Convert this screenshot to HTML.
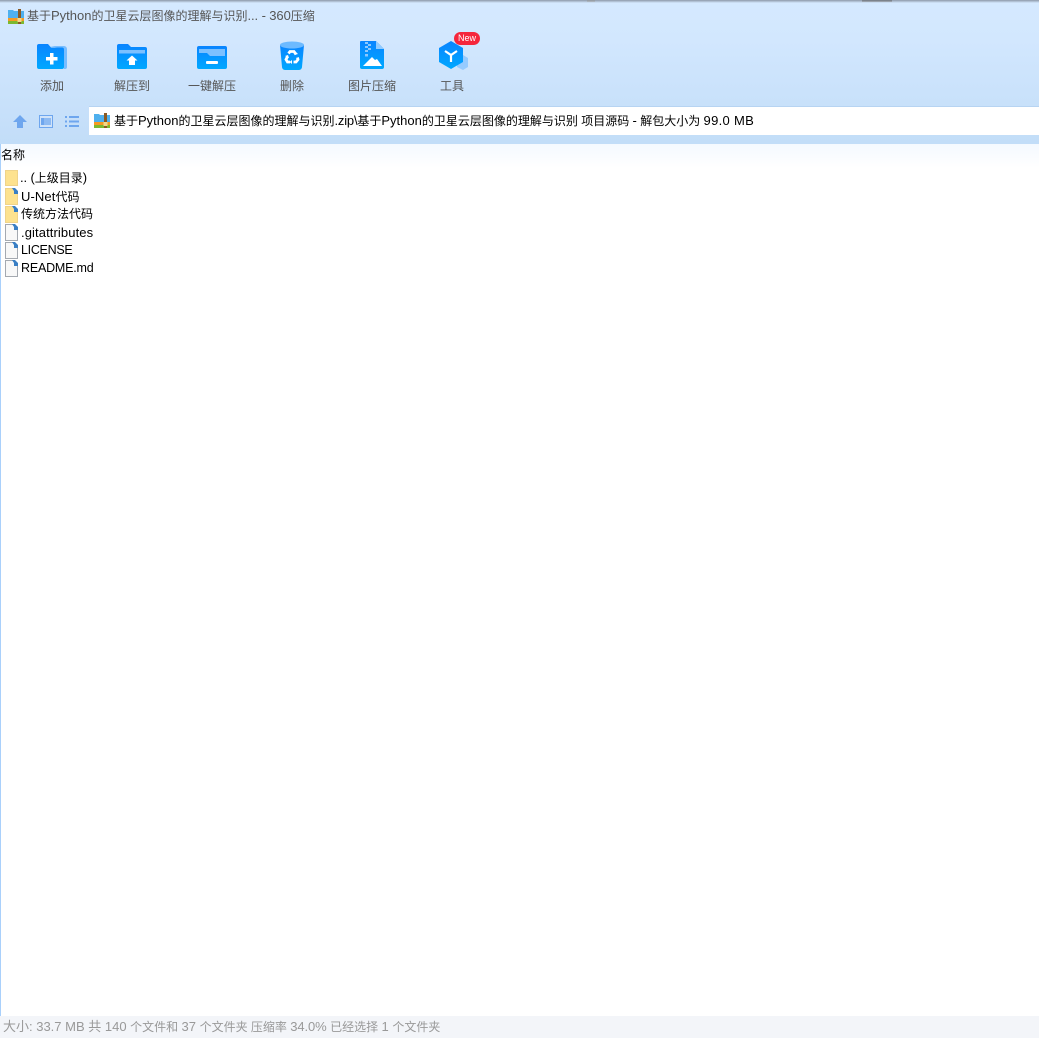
<!DOCTYPE html>
<html><head><meta charset="utf-8"><style>
html,body{margin:0;padding:0;background:#fff}
body{width:1039px;height:1038px;position:relative;overflow:hidden;font:12px "Liberation Sans","Noto Sans CJK SC",sans-serif;color:#000}
.a{position:absolute;white-space:nowrap;line-height:18px}
.a i{font-style:normal;font-size:13px}
.t{position:absolute;width:80px;text-align:center;top:77px;color:#555;line-height:18px}
svg{position:absolute;overflow:visible}
</style></head><body>
<div style="position:absolute;left:0;top:0;width:1039px;height:144px;background:linear-gradient(#d5e9ff 0,#d2e7fe 40px,#c2ddf8 144px)"></div>
<div style="position:absolute;left:0;top:0;width:1039px;height:3px;background:linear-gradient(#8d99a8,#d5e9ff)"></div>
<div style="position:absolute;left:862px;top:0;width:30px;height:2px;background:linear-gradient(#6c727a,#a9b2bd)"></div>
<div style="position:absolute;left:587px;top:0;width:8px;height:2px;background:linear-gradient(#8d939b,#b5bdc7)"></div>
<div style="position:absolute;left:0;top:144px;width:1039px;height:24px;background:linear-gradient(#f4f9ff,#fff)"></div>
<div style="position:absolute;left:0;top:144px;width:1px;height:872px;background:#a9d0fb"></div>

<svg style="left:8px;top:9px" width="16" height="15" viewBox="0 0 16 15"><path d="M0 1h5l1 1h10v7H0z" fill="#4fb0ee"/><rect y="9" width="16" height="3" fill="#f59a23"/><rect y="12" width="16" height="3" fill="#7cb82f"/><rect x="10" y="0" width="3" height="15" fill="#8a5a24"/><rect x="9.500" y="9" width="4" height="4" fill="#f3d98a"/></svg>
<div class="a" style="left:27px;top:7px;color:#555">基于<i>Python</i>的卫星云层图像的理解与识别<i style="letter-spacing:-.1px">... - 360</i>压缩</div>

<svg style="left:37px;top:44px" width="31" height="26" viewBox="0 0 31 26"><defs><linearGradient id="g" x1="0" y1="0" x2="0" y2="1"><stop offset="0" stop-color="#0a84ff"/><stop offset="1" stop-color="#00a8ff"/></linearGradient></defs><path d="M13 2h14a3 3 0 0 1 3 3v18a2 2 0 0 1-2 2h-1V5z" fill="#78bdff"/><path d="M2 0h9l3 3.500h11a2 2 0 0 1 2 2V23a2 2 0 0 1-2 2H2a2 2 0 0 1-2-2V2a2 2 0 0 1 2-2z" fill="url(#g)"/><path d="M13 9h3.500v4h4v3.500h-4v4H13v-4H9V13h4z" fill="#fff"/></svg>
<div class="t" style="left:12px">添加</div>

<svg style="left:117px;top:44px" width="30" height="25" viewBox="0 0 30 25"><path d="M2 0h9l3 3h14a2 2 0 0 1 2 2v18a2 2 0 0 1-2 2H2a2 2 0 0 1-2-2V2a2 2 0 0 1 2-2z" fill="url(#g)"/><rect x="2" y="6" width="26" height="3.500" fill="#7cc0ff"/><path d="M15 11.500l5.500 5H18V21h-6v-4.500H9.500z" fill="#fff"/></svg>
<div class="t" style="left:92px">解压到</div>

<svg style="left:197px;top:46px" width="30" height="23" viewBox="0 0 30 23"><rect width="30" height="23" rx="2" fill="url(#g)"/><path d="M2 3h26v7H13l-3-3H2z" fill="#7cc0ff"/><rect x="9" y="15" width="12" height="3" rx="1" fill="#fff"/></svg>
<div class="t" style="left:172px">一键解压</div>

<svg style="left:280px;top:41px" width="24" height="29" viewBox="0 0 24 29"><path d="M0 4h24l-2 22a3 3 0 0 1-3 3H5a3 3 0 0 1-3-3z" fill="url(#g)"/><ellipse cx="12" cy="4" rx="12" ry="3.500" fill="#6dbaff"/><g fill="none" stroke="#fff" stroke-width="2.800"><path d="M8.500 12.500l1.500-2h4l2 3"/><path d="M17.500 16.500l.5 2-2 2.500h-2.500"/><path d="M10 21H7.500L6 18.500l1.500-3"/></g><path d="M15 10l3 3-3.500 1zM12 23l-2.500-2 2.500-2zM5 15l3-1 1 3z" fill="#fff"/></svg>
<div class="t" style="left:252px">删除</div>

<svg style="left:360px;top:41px" width="24" height="28" viewBox="0 0 24 28"><path d="M1 0h15l8 8v18a2 2 0 0 1-2 2H2a2 2 0 0 1-2-2V1a1 1 0 0 1 1-1z" fill="url(#g)"/><path d="M16 0l8 8h-8z" fill="#92cbff"/><g fill="#8cc8ff"><rect x="5" y="1" width="3" height="2"/><rect x="8" y="3" width="3" height="2"/><rect x="5" y="5" width="3" height="2"/><rect x="8" y="7" width="3" height="2"/><rect x="5" y="9" width="3" height="2"/><rect x="5" y="13" width="3" height="2.500"/></g><path d="M3 25l9-9 3 3 2-1 5 7z" fill="#fff"/></svg>
<div class="t" style="left:332px">图片压缩</div>

<svg style="left:439px;top:41px" width="30" height="29" viewBox="0 0 30 29"><path d="M24 14l5 3v9l-5 3-6-3v-9z" fill="#96cbff"/><path d="M12 0l12 7v14l-12 7-12-7V7z" fill="url(#g)"/><path d="M6 10l6 4 6-4M12 14v7" fill="none" stroke="#fff" stroke-width="2.200"/></svg>
<div style="position:absolute;left:454px;top:32px;width:26px;height:13px;border-radius:7px;background:#f5263c;color:#fff;font-size:9px;line-height:13px;text-align:center">New</div>
<div class="t" style="left:412px">工具</div>

<svg style="left:13px;top:115px" width="14" height="13" viewBox="0 0 14 13"><path d="M7 0l7 7h-4v6H4V7H0z" fill="#6ea6ee"/></svg>
<svg style="left:39px;top:115px" width="14" height="13" viewBox="0 0 14 13"><rect x=".5" y=".5" width="13" height="12" fill="#d0e3f9" stroke="#6ea6ee"/><rect x="2" y="3" width="10" height="7" fill="#8dbaf2"/><rect x="2" y="3" width="3" height="7" fill="#6ea6ee"/></svg>
<svg style="left:65px;top:116px" width="14" height="11" viewBox="0 0 14 11"><g fill="#6ea6ee"><rect width="2" height="2"/><rect x="4" width="10" height="2"/><rect y="4.500" width="2" height="2"/><rect x="4" y="4.500" width="10" height="2"/><rect y="9" width="2" height="2"/><rect x="4" y="9" width="10" height="2"/></g></svg>

<div style="position:absolute;left:89px;top:106px;width:950px;height:1px;background:#b7d4f2"></div>
<div style="position:absolute;left:89px;top:107px;width:950px;height:28px;background:#fff"></div>
<svg style="left:94px;top:113px" width="16" height="15" viewBox="0 0 16 15"><path d="M0 1h5l1 1h10v7H0z" fill="#4fb0ee"/><rect y="9" width="16" height="3" fill="#f59a23"/><rect y="12" width="16" height="3" fill="#7cb82f"/><rect x="10" y="0" width="3" height="15" fill="#8a5a24"/><rect x="9.500" y="9" width="4" height="4" fill="#f3d98a"/></svg>
<div class="a" style="left:114px;top:112px">基于<i>Python</i>的卫星云层图像的理解与识别<i style="letter-spacing:-.2px">.zip\</i>基于<i>Python</i>的卫星云层图像的理解与识别 项目源码 <i>-</i> 解包大小为 <i style="letter-spacing:.3px">99.0 MB</i></div>

<div class="a" style="left:1px;top:146px">名称</div>

<svg style="left:5px;top:170px" width="13" height="16" viewBox="0 0 13 16"><rect x=".5" y=".5" width="12" height="15" fill="#fde28f" stroke="#efd38a"/></svg>
<svg style="left:5px;top:188px" width="13" height="17" viewBox="0 0 13 17"><path d="M.5.500h8l4 4v12H.5z" fill="#fde28f" stroke="#efd38a"/><path d="M7 0h3l3 3v3H9V3z" fill="#3a7fc4"/></svg>
<svg style="left:5px;top:206px" width="13" height="17" viewBox="0 0 13 17"><path d="M.5.500h8l4 4v12H.5z" fill="#fde28f" stroke="#efd38a"/><path d="M7 0h3l3 3v3H9V3z" fill="#3a7fc4"/></svg>
<svg style="left:5px;top:224px" width="13" height="17" viewBox="0 0 13 17"><path d="M.5.500h8l4 4v12H.5z" fill="#f8f8f8" stroke="#a4a9b0"/><path d="M7 0h3l3 3v3H9V3z" fill="#3a7fc4"/></svg>
<svg style="left:5px;top:242px" width="13" height="17" viewBox="0 0 13 17"><path d="M.5.500h8l4 4v12H.5z" fill="#f8f8f8" stroke="#a4a9b0"/><path d="M7 0h3l3 3v3H9V3z" fill="#3a7fc4"/></svg>
<svg style="left:5px;top:260px" width="13" height="17" viewBox="0 0 13 17"><path d="M.5.500h8l4 4v12H.5z" fill="#f8f8f8" stroke="#a4a9b0"/><path d="M7 0h3l3 3v3H9V3z" fill="#3a7fc4"/></svg>

<div class="a" style="left:20px;top:169px"><i style="letter-spacing:-.1px">.. (</i>上级目录<i>)</i></div>
<div class="a" style="left:21px;top:188px"><i style="letter-spacing:.1px">U-Net</i>代码</div>
<div class="a" style="left:21px;top:205px">传统方法代码</div>
<div class="a" style="left:21px;top:224px"><i style="letter-spacing:.1px">.gitattributes</i></div>
<div class="a" style="left:21px;top:241px"><i style="font-size:12.500px;letter-spacing:-.3px">LICENSE</i></div>
<div class="a" style="left:21px;top:259px"><i style="font-size:12.500px;letter-spacing:-.2px">README.md</i></div>

<div style="position:absolute;left:0;top:1016px;width:1039px;height:22px;background:#f3f5f9"></div>
<div class="a" style="left:3px;top:1018px;color:#999"><i>大小: 33.7 MB 共 140 </i>个文件和 <i>37 </i>个文件夹 压缩率 <i style="letter-spacing:-.1px">34.0% </i>已经选择 <i>1 </i>个文件夹</div>
</body></html>
